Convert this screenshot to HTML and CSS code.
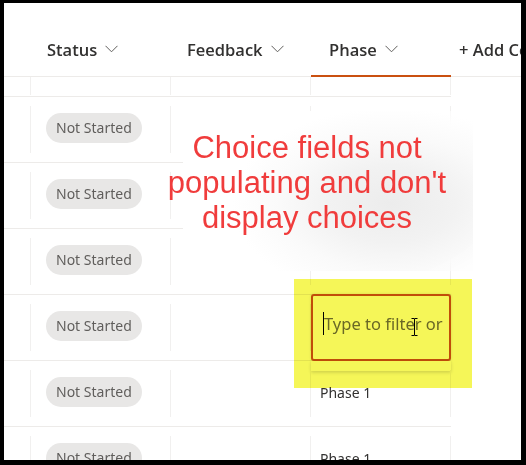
FILE: index.html
```html
<!DOCTYPE html>
<html>
<head>
<meta charset="utf-8">
<link rel="stylesheet" href="styles.css">
</head>
<body>
<div class="frame">
  <div class="header">
    <div class="hsel"></div>
    <div class="hcol">Status<svg class="chev" width="13" height="8" viewBox="0 0 13 8"><polyline points="0.5,0.8 6.5,6.8 12.5,0.8"/></svg></div>
    <div class="hcol">Feedback<svg class="chev" width="13" height="8" viewBox="0 0 13 8"><polyline points="0.5,0.8 6.5,6.8 12.5,0.8"/></svg></div>
    <div class="hcol active">Phase<svg class="chev" width="13" height="8" viewBox="0 0 13 8"><polyline points="0.5,0.8 6.5,6.8 12.5,0.8"/></svg></div>
    <div class="hadd">+ Add Column</div>
  </div>

  <div class="row partial">
    <div class="sel"></div>
    <div class="c"></div>
    <div class="c"></div>
    <div class="c last"></div>
  </div>
  <div class="row">
    <div class="sel"></div>
    <div class="c status"><span class="pill">Not Started</span></div>
    <div class="c"></div>
    <div class="c last"></div>
  </div>
  <div class="row">
    <div class="sel"></div>
    <div class="c status"><span class="pill">Not Started</span></div>
    <div class="c"></div>
    <div class="c last"></div>
  </div>
  <div class="row">
    <div class="sel"></div>
    <div class="c status"><span class="pill">Not Started</span></div>
    <div class="c"></div>
    <div class="c last"></div>
  </div>
  <div class="row">
    <div class="sel"></div>
    <div class="c status"><span class="pill">Not Started</span></div>
    <div class="c"></div>
    <div class="c last phase">
      <div class="editor">
        <span class="caret"></span><span class="placeholder">Type to filter or add choice</span>
        <svg class="ibeam" width="7" height="18" viewBox="0 0 7 18"><path d="M0.5 0.5h2.5c0.4 0 0.5 0.3 0.5 0.8M6.5 0.5h-2.5c-0.4 0-0.5 0.3-0.5 0.8M3.5 1v16M0.5 17.5h2.5c0.4 0 0.5-0.3 0.5-0.8M6.5 17.5h-2.5c-0.4 0-0.5-0.3-0.5-0.8"/></svg>
        <div class="dropdown"></div>
      </div>
    </div>
  </div>
  <div class="row">
    <div class="sel"></div>
    <div class="c status"><span class="pill">Not Started</span></div>
    <div class="c"></div>
    <div class="c last phase"><span class="ptext">Phase 1</span></div>
  </div>
  <div class="row">
    <div class="sel"></div>
    <div class="c status"><span class="pill">Not Started</span></div>
    <div class="c"></div>
    <div class="c last phase"><span class="ptext">Phase 1</span></div>
  </div>

  <div class="anno">
    <div class="anno-text">Choice fields not<br>populating and don't<br>display choices</div>
  </div>

  <div class="highlight"></div>
</div>
</body>
</html>
```

FILE: styles.css
```css
html, body {
  margin: 0;
  padding: 0;
  background: #000;
  height: 465px;
  overflow: hidden;
}

.frame {
  margin: 3px 0 0 4px;
  width: 517px;
  height: 457px;
  background: #fff;
  overflow: hidden;
  position: relative;
  font-family: "Noto Sans", "Open Sans", sans-serif;
  color: #323130;
}

.header {
  display: flex;
  height: 74px;
  box-sizing: border-box;
  border-bottom: 1px solid #edebe9;
}

.hsel {
  width: 26px;
  flex: none;
}

.hcol {
  width: 140px;
  flex: none;
  box-sizing: border-box;
  padding: 35px 0 0 17px;
  font-family: "Open Sans", "Noto Sans", sans-serif;
  font-size: 16.5px;
  line-height: 24px;
  font-weight: 600;
  display: flex;
  align-items: flex-start;
  white-space: nowrap;
}

.hcol.active {
  height: 74px;
  margin-bottom: -1px;
  margin-left: 1px;
  width: 140px;
  padding-left: 18px;
  border-bottom: 2px solid #ca5010;
}

.chev {
  flex: none;
  margin: 7px 0 0 8px;
  fill: none;
  stroke: #605e5c;
  stroke-width: 1;
}

.hadd {
  flex: none;
  box-sizing: border-box;
  padding: 35px 0 0 8px;
  font-family: "Open Sans", "Noto Sans", sans-serif;
  font-size: 16.5px;
  line-height: 24px;
  font-weight: 600;
  white-space: nowrap;
}

.row {
  display: flex;
  width: 447px;
  height: 66px;
  box-sizing: border-box;
  border-bottom: 1px solid #edebe9;
}

.row.partial {
  height: 20px;
}

.sel {
  width: 26px;
  flex: none;
}

.c {
  width: 140px;
  flex: none;
  display: flex;
  align-items: center;
  box-sizing: border-box;
  background: linear-gradient(#f1f0ef, #f1f0ef) 0 9px / 1px calc(100% - 18px) no-repeat;
}

.c.last {
  width: 141px;
  position: relative;
  background:
    linear-gradient(#f1f0ef, #f1f0ef) 0 9px / 1px calc(100% - 18px) no-repeat,
    linear-gradient(#f1f0ef, #f1f0ef) 100% 9px / 1px calc(100% - 18px) no-repeat;
}

.row.partial .c {
  background: linear-gradient(#f1f0ef, #f1f0ef) 0 0 / 1px calc(100% - 1px) no-repeat;
}

.row.partial .c.last {
  background:
    linear-gradient(#f1f0ef, #f1f0ef) 0 0 / 1px calc(100% - 1px) no-repeat,
    linear-gradient(#f1f0ef, #f1f0ef) 100% 0 / 1px calc(100% - 1px) no-repeat;
}

.status {
  padding: 0 0 3px 16px;
}

.pill {
  display: inline-block;
  height: 30px;
  line-height: 30px;
  padding: 0 10px;
  border-radius: 15px;
  background: #e8e7e6;
  color: #605e5c;
  font-size: 14px;
  white-space: nowrap;
}

.phase {
  padding: 0 0 3px 10px;
}

.ptext {
  font-size: 14px;
  color: #323130;
}

.editor {
  position: absolute;
  top: -1px;
  left: 1px;
  width: 140px;
  height: 67px;
  box-sizing: border-box;
  border: 2px solid #c9501a;
  border-radius: 3px;
  background: #fff;
  display: flex;
  align-items: center;
  padding: 0 6px 9px 10px;
  overflow: visible;
  box-shadow: 0 0 3px rgba(0, 0, 0, 0.12);
}

.caret {
  flex: none;
  width: 1px;
  height: 23px;
  background: #000;
}

.placeholder {
  font-size: 16.5px;
  color: #6e6c6a;
  white-space: nowrap;
  overflow: hidden;
  min-width: 0;
}

.ibeam {
  position: absolute;
  left: 98px;
  top: 22px;
  fill: none;
  stroke: #000;
  stroke-width: 1;
}

.dropdown {
  position: absolute;
  left: -2px;
  right: -2px;
  top: calc(100% + 2px);
  height: 10px;
  background: #fff;
  box-shadow: 0 1.6px 3.6px rgba(0, 0, 0, 0.16), 0 0.3px 0.9px rgba(0, 0, 0, 0.12);
}

.anno {
  position: absolute;
  left: 179px;
  top: 108px;
  width: 290px;
  height: 160px;
}

.anno::before {
  content: "";
  position: absolute;
  inset: 0;
  background:
    radial-gradient(ellipse 55% 60% at 72% 58%, #ececec 0%, #f2f2f2 40%, #fafafa 70%, rgba(255, 255, 255, 0) 100%),
    #fff;
  -webkit-mask-image: radial-gradient(ellipse 75% 75% at 50% 50%, #000 78%, rgba(0, 0, 0, 0) 100%);
  mask-image: radial-gradient(ellipse 75% 75% at 50% 50%, #000 78%, rgba(0, 0, 0, 0) 100%);
}

.anno-text {
  position: relative;
  width: 300px;
  margin-left: -26px;
  padding-top: 19px;
  text-align: center;
  font-family: "Liberation Sans", Arial, sans-serif;
  font-size: 31px;
  line-height: 35px;
  color: #f03c3c;
  white-space: nowrap;
}

.highlight {
  position: absolute;
  left: 290px;
  top: 276px;
  width: 178px;
  height: 109px;
  background: rgb(245, 246, 88);
  mix-blend-mode: multiply;
}
```
